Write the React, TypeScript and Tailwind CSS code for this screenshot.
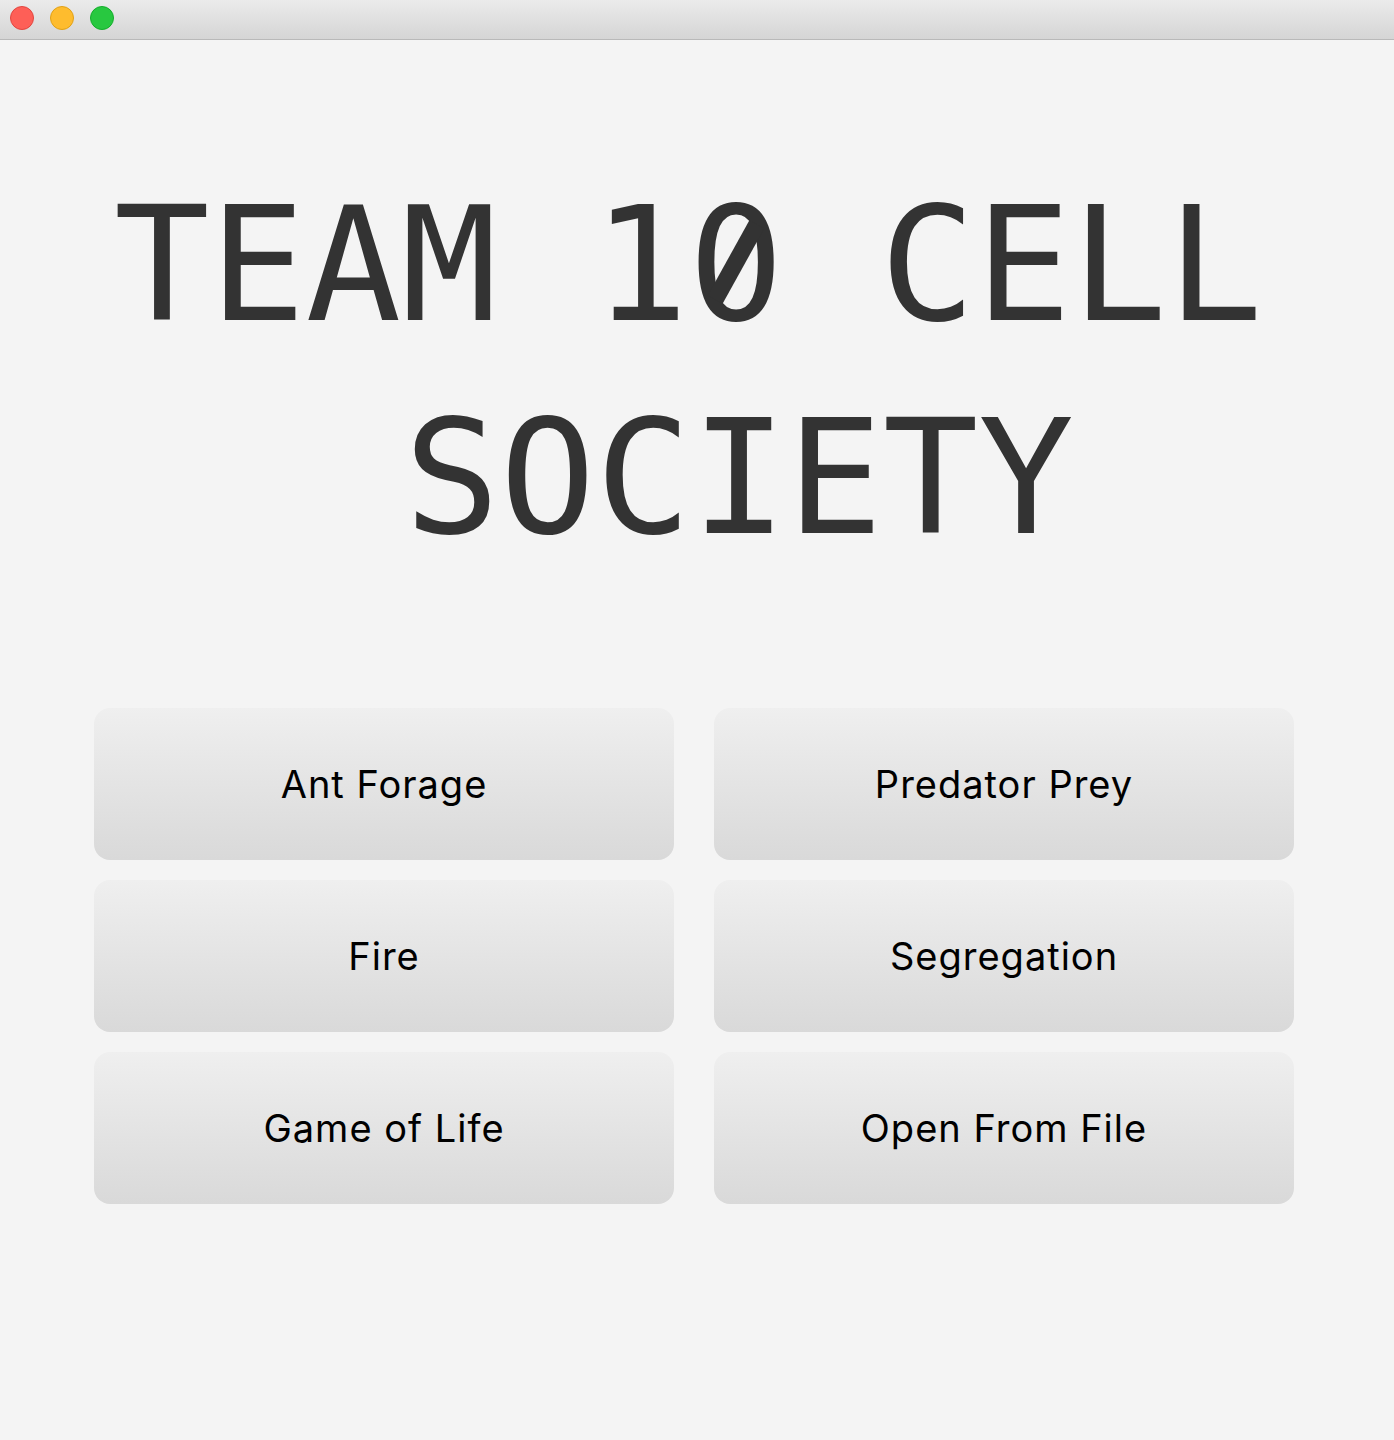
const BUTTONS = ['Ant Forage', 'Predator Prey', 'Fire', 'Segregation', 'Game of Life', 'Open From File'];

function TitleBar() {
  return (
    <div className="h-[40px] flex items-start pt-[6px] gap-[16px] pl-[10px] bg-gradient-to-b from-[#ebebeb] to-[#d5d5d5] border-b border-[#b9b9b9]">
      <span className="block w-[24px] h-[24px] rounded-full bg-[#fe5f57] border border-[#e2463f]" />
      <span className="block w-[24px] h-[24px] rounded-full bg-[#febc2e] border border-[#e1a116]" />
      <span className="block w-[24px] h-[24px] rounded-full bg-[#28c840] border border-[#14ae2b]" />
    </div>
  );
}

// menlo-style slashed zero on top of the dotted one
function SlashedZero() {
  return (
    <span className="relative inline-block">
      0
      <span className="absolute left-1/2 top-[104px] -translate-x-1/2 -translate-y-1/2 w-[34px] h-[62px] rounded-full bg-[#f4f4f4]" />
      <span className="absolute left-1/2 top-[104px] -translate-x-1/2 -translate-y-1/2 w-[17px] h-[86px] rotate-[29deg] bg-[#333333]" />
    </span>
  );
}

export default function App() {
  return (
    <div className="w-[1394px] h-[1440px] bg-[#f4f4f4] flex flex-col">
      <TitleBar />
      <div className="pt-[118px] text-[#333333] text-[159px] leading-[213px] font-['DejaVu_Sans_Mono',Menlo,monospace]">
        <div className="pl-[114px] whitespace-pre">TEAM 1<SlashedZero /> CELL</div>
        <div className="pl-[404px] whitespace-pre">SOCIETY</div>
      </div>
      <div className="mt-[124px] ml-[94px] w-[1200px] grid grid-cols-2 gap-x-[40px] gap-y-[20px]">
        {BUTTONS.map((label) => (
          <button
            key={label}
            className="h-[152px] rounded-[16px] bg-gradient-to-b from-[#efefef] to-[#d9d9d9] text-black text-[38px] tracking-[1px] font-['Inter','Liberation_Sans',sans-serif]"
          >
            {label}
          </button>
        ))}
      </div>
    </div>
  );
}
